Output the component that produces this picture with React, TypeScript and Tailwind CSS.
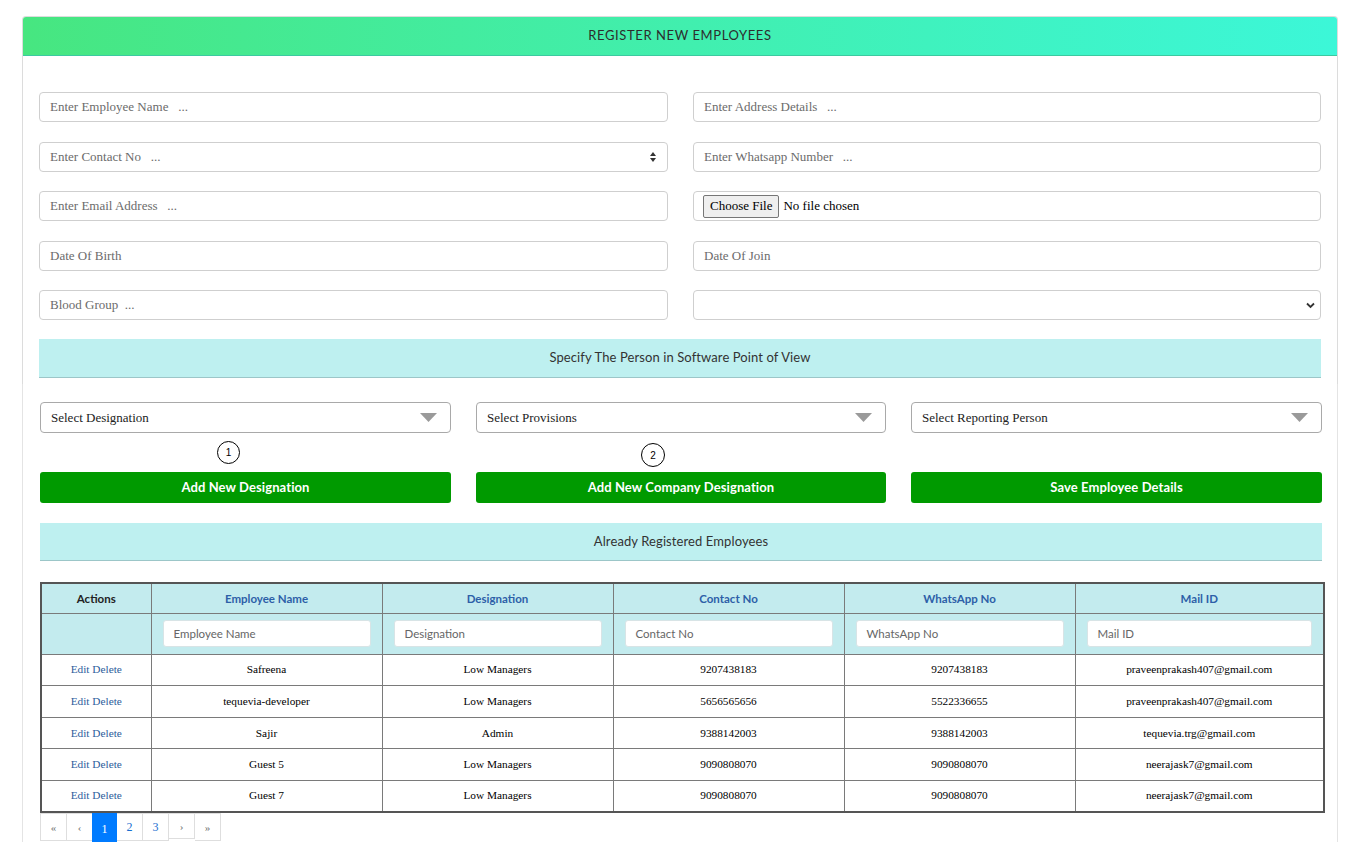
import React from "react";

const serif = { fontFamily: '"Liberation Serif", "Times New Roman", serif' };

function Field({ text, spinner, chevron }: { text?: string; spinner?: boolean; chevron?: boolean }) {
  return (
    <div className={`h-[30px] border border-[#cfcfcf] rounded-[4px] bg-white flex items-center pl-[10px] justify-between ${chevron ? "pr-[5px]" : "pr-[10px]"}`}>
      <span className="text-[13px] text-[#6b6b6b] font-['Liberation_Serif',serif] whitespace-pre">{text}</span>
      {spinner && (
        <svg width="8" height="12" viewBox="0 0 8 12">
          <path d="M4 1 L7 5 L1 5 Z" fill="#333" />
          <path d="M4 11 L7 7 L1 7 Z" fill="#333" />
        </svg>
      )}
      {chevron && (
        <svg width="9" height="7" viewBox="0 0 9 7">
          <path d="M1 1.5 L4.5 5 L8 1.5" fill="none" stroke="#333" strokeWidth="1.8" />
        </svg>
      )}
    </div>
  );
}

function FileField() {
  return (
    <div className="h-[30px] border border-[#cfcfcf] rounded-[4px] bg-white flex items-center pl-[9px]">
      <span className="h-[23px] px-[6px] flex items-center border border-[#767676] bg-[#efefef] rounded-[2px] text-[13px] text-black font-['Liberation_Serif',serif]">
        Choose File
      </span>
      <span className="ml-[4px] text-[13px] text-black font-['Liberation_Serif',serif]">No file chosen</span>
    </div>
  );
}

function SelectBox({ text }: { text: string }) {
  return (
    <div className="h-[31px] border border-[#a9a9a9] rounded-[4px] bg-white flex items-center justify-between pl-[10px] pr-[13px]">
      <span className="text-[13px] text-[#222] font-['Liberation_Serif',serif]">{text}</span>
      <svg width="17" height="9" viewBox="0 0 17 9">
        <path d="M0 0 L17 0 L8.5 9 Z" fill="#9a9a9a" />
      </svg>
    </div>
  );
}

function GreenBtn({ text }: { text: string }) {
  return (
    <div className="h-[31px] bg-[#009a00] rounded-[3px] flex items-center justify-center text-white text-[13px] font-bold font-['Lato',sans-serif] tracking-[0.1px]">
      {text}
    </div>
  );
}

function Banner({ text, h }: { text: string; h: string }) {
  return (
    <div className={`${h} bg-[#bef0f0] border-b border-[#9cc6c8] flex items-center justify-center text-[13px] text-[#333] font-['Lato',sans-serif] tracking-[0.1px]`}>
      {text}
    </div>
  );
}

const rows = [
  ["Safreena", "Low Managers", "9207438183", "9207438183", "praveenprakash407@gmail.com"],
  ["tequevia-developer", "Low Managers", "5656565656", "5522336655", "praveenprakash407@gmail.com"],
  ["Sajir", "Admin", "9388142003", "9388142003", "tequevia.trg@gmail.com"],
  ["Guest 5", "Low Managers", "9090808070", "9090808070", "neerajask7@gmail.com"],
  ["Guest 7", "Low Managers", "9090808070", "9090808070", "neerajask7@gmail.com"],
];

const heads = ["Employee Name", "Designation", "Contact No", "WhatsApp No", "Mail ID"];

export default function App() {
  return (
    <div className="w-[1366px] h-[842px] overflow-hidden bg-white pt-[16px]">
      <div className="ml-[22px] w-[1316px]">
        {/* upper card */}
        <div className="border border-[#dcdcdc] rounded-t-[4px] border-b-0">
          <div className="h-[39px] bg-gradient-to-r from-[#47e680] to-[#3cf7d8] border-b border-[#3cc9a0] flex items-center justify-center text-[13px] text-[#2d2d2d] font-['Lato',sans-serif] tracking-[0.6px] rounded-t-[3px]">
            REGISTER NEW EMPLOYEES
          </div>
          <div className="px-[16px] pt-[36px] pb-[6px]">
            <div className="grid grid-cols-[629px_628px] gap-x-[25px] gap-y-[19.5px]">
              <Field text="Enter Employee Name   ..." />
              <Field text="Enter Address Details   ..." />
              <Field text="Enter Contact No   ..." spinner />
              <Field text="Enter Whatsapp Number   ..." />
              <Field text="Enter Email Address   ..." />
              <FileField />
              <Field text="Date Of Birth" />
              <Field text="Date Of Join" />
              <Field text="Blood Group  ..." />
              <Field chevron />
            </div>
            <div className="mt-[19px]">
              <Banner text="Specify The Person in Software Point of View" h="h-[39px]" />
            </div>
          </div>
        </div>
        {/* lower section */}
        <div className="border-x border-[#e4e4e4] h-[458px] pl-[17px] pr-[15px] pt-[18px]">
          <div className="grid grid-cols-[411px_410px_411px] gap-x-[25px]">
            <SelectBox text="Select Designation" />
            <SelectBox text="Select Provisions" />
            <SelectBox text="Select Reporting Person" />
          </div>
          <div className="grid grid-cols-[411px_410px_411px] gap-x-[25px] h-[39px]">
            <div>
              <div className="mt-[8px] ml-[177px] w-[23px] h-[23px] rounded-full border border-black flex items-center justify-center text-[10px] text-black font-['Liberation_Sans',sans-serif]">
                1
              </div>
            </div>
            <div>
              <div className="mt-[10px] ml-[165px] w-[24px] h-[24px] rounded-full border border-black flex items-center justify-center text-[10px] text-black font-['Liberation_Sans',sans-serif]">
                2
              </div>
            </div>
            <div />
          </div>
          <div className="grid grid-cols-[411px_410px_411px] gap-x-[25px]">
            <GreenBtn text="Add New Designation" />
            <GreenBtn text="Add New Company Designation" />
            <GreenBtn text="Save Employee Details" />
          </div>
          <div className="mt-[20px] w-[1282px]">
            <Banner text="Already Registered Employees" h="h-[38px]" />
          </div>
          <div className="mt-[21px] w-[1283px]">
            <table className="w-[1283px] table-fixed border-collapse border-2 border-[#555]">
              <colgroup>
                <col className="w-[110px]" />
                <col className="w-[231px]" />
                <col className="w-[231px]" />
                <col className="w-[231px]" />
                <col className="w-[231px]" />
                <col className="w-[249px]" />
              </colgroup>
              <thead>
                <tr className="h-[30px] bg-[#c3ebee]">
                  <th className="border border-[#7a7a7a] text-[11.5px] font-bold text-[#222] font-['Lato',sans-serif]">Actions</th>
                  {heads.map((h) => (
                    <th key={h} className="border border-[#7a7a7a] text-[11.5px] font-bold text-[#2d5fa8] font-['Lato',sans-serif]">
                      {h}
                    </th>
                  ))}
                </tr>
                <tr className="h-[41px] bg-[#c3ebee]">
                  <th className="border border-[#7a7a7a]"></th>
                  {heads.map((h) => (
                    <th key={h} className="border border-[#7a7a7a] px-[11px]">
                      <div className="h-[27px] bg-white rounded-[3px] border border-[#d8e4e6] flex items-center pl-[10px] text-[11.5px] font-normal text-[#666] font-['Lato',sans-serif]">
                        {h}
                      </div>
                    </th>
                  ))}
                </tr>
              </thead>
              <tbody>
                {rows.map((r, i) => (
                  <tr key={i} className="h-[31.6px]">
                    <td className="border border-[#7a7a7a] text-center text-[11.3px] text-[#2e5d9c]" style={serif}>
                      Edit Delete
                    </td>
                    {r.map((c, j) => (
                      <td key={j} className="border border-[#7a7a7a] text-center text-[11.3px] text-black" style={serif}>
                        {c}
                      </td>
                    ))}
                  </tr>
                ))}
              </tbody>
            </table>
          </div>
          <div className="flex items-start text-[11px]" style={serif}>
            <div className="w-[27px] h-[28px] border border-[#dedede] flex items-center justify-center text-[#777]">«</div>
            <div className="w-[25px] h-[28px] border-y border-[#dedede] flex items-center justify-center text-[#777]">‹</div>
            <div className="w-[25px] h-[32px] bg-[#007bff] flex items-center justify-center text-white text-[12px]">1</div>
            <div className="w-[26px] h-[28px] border-y border-r border-[#dedede] flex items-center justify-center text-[#1a6fd0] text-[12px]">2</div>
            <div className="w-[26px] h-[28px] border-y border-r border-[#dedede] flex items-center justify-center text-[#1a6fd0] text-[12px]">3</div>
            <div className="w-[26px] h-[26px] border-y border-r border-[#dedede] flex items-center justify-center text-[#777]">›</div>
            <div className="w-[26px] h-[28px] border border-l-0 border-[#dedede] flex items-center justify-center text-[#777]">»</div>
          </div>
        </div>
      </div>
    </div>
  );
}
